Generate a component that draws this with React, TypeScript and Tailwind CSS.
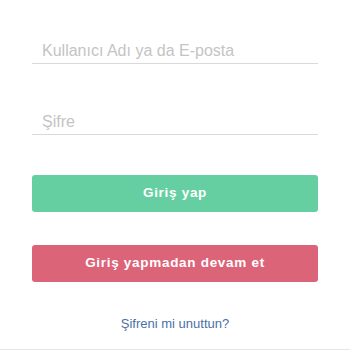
import React, { useState } from 'react';

const App: React.FC = () => {
  const [username, setUsername] = useState('');
  const [password, setPassword] = useState('');

  return (
    <div className="w-[350px] h-[350px] bg-white overflow-hidden font-['Liberation_Sans',Arial,sans-serif] border-b border-[#e6e6e6]">
      <div className="px-8 pt-[34px] flex flex-col">
        {/* Username */}
        <input
          className="w-full h-[30px] border-b border-[#d9d9d9] text-[16px] text-[#444] placeholder-[#c4c4c4] outline-none px-[10px] pt-[5px] pb-0"
          placeholder="Kullanıcı Adı ya da E-posta"
          value={username}
          onChange={e => setUsername(e.target.value)}
        />
        {/* Password */}
        <input
          type="password"
          className="w-full h-[30px] mt-[41px] border-b border-[#d9d9d9] text-[16px] text-[#444] placeholder-[#c4c4c4] outline-none px-[10px] pt-[4px] pb-0"
          placeholder="Şifre"
          value={password}
          onChange={e => setPassword(e.target.value)}
        />

        <button className="mt-[40px] h-[37px] w-full rounded-[3px] bg-[#66cfa2] text-white text-[13.5px] font-bold tracking-[0.7px]">
          Giriş yap
        </button>

        <button className="mt-[33px] h-[37px] w-full rounded-[3px] bg-[#dc6479] text-white text-[13.5px] font-bold tracking-[0.7px]">
          Giriş yapmadan devam et
        </button>

        <a className="mt-[32px] text-center text-[13px] text-[#4a70a8]" href="#">
          Şifreni mi unuttun?
        </a>
      </div>
    </div>
  );
};

export default App;
